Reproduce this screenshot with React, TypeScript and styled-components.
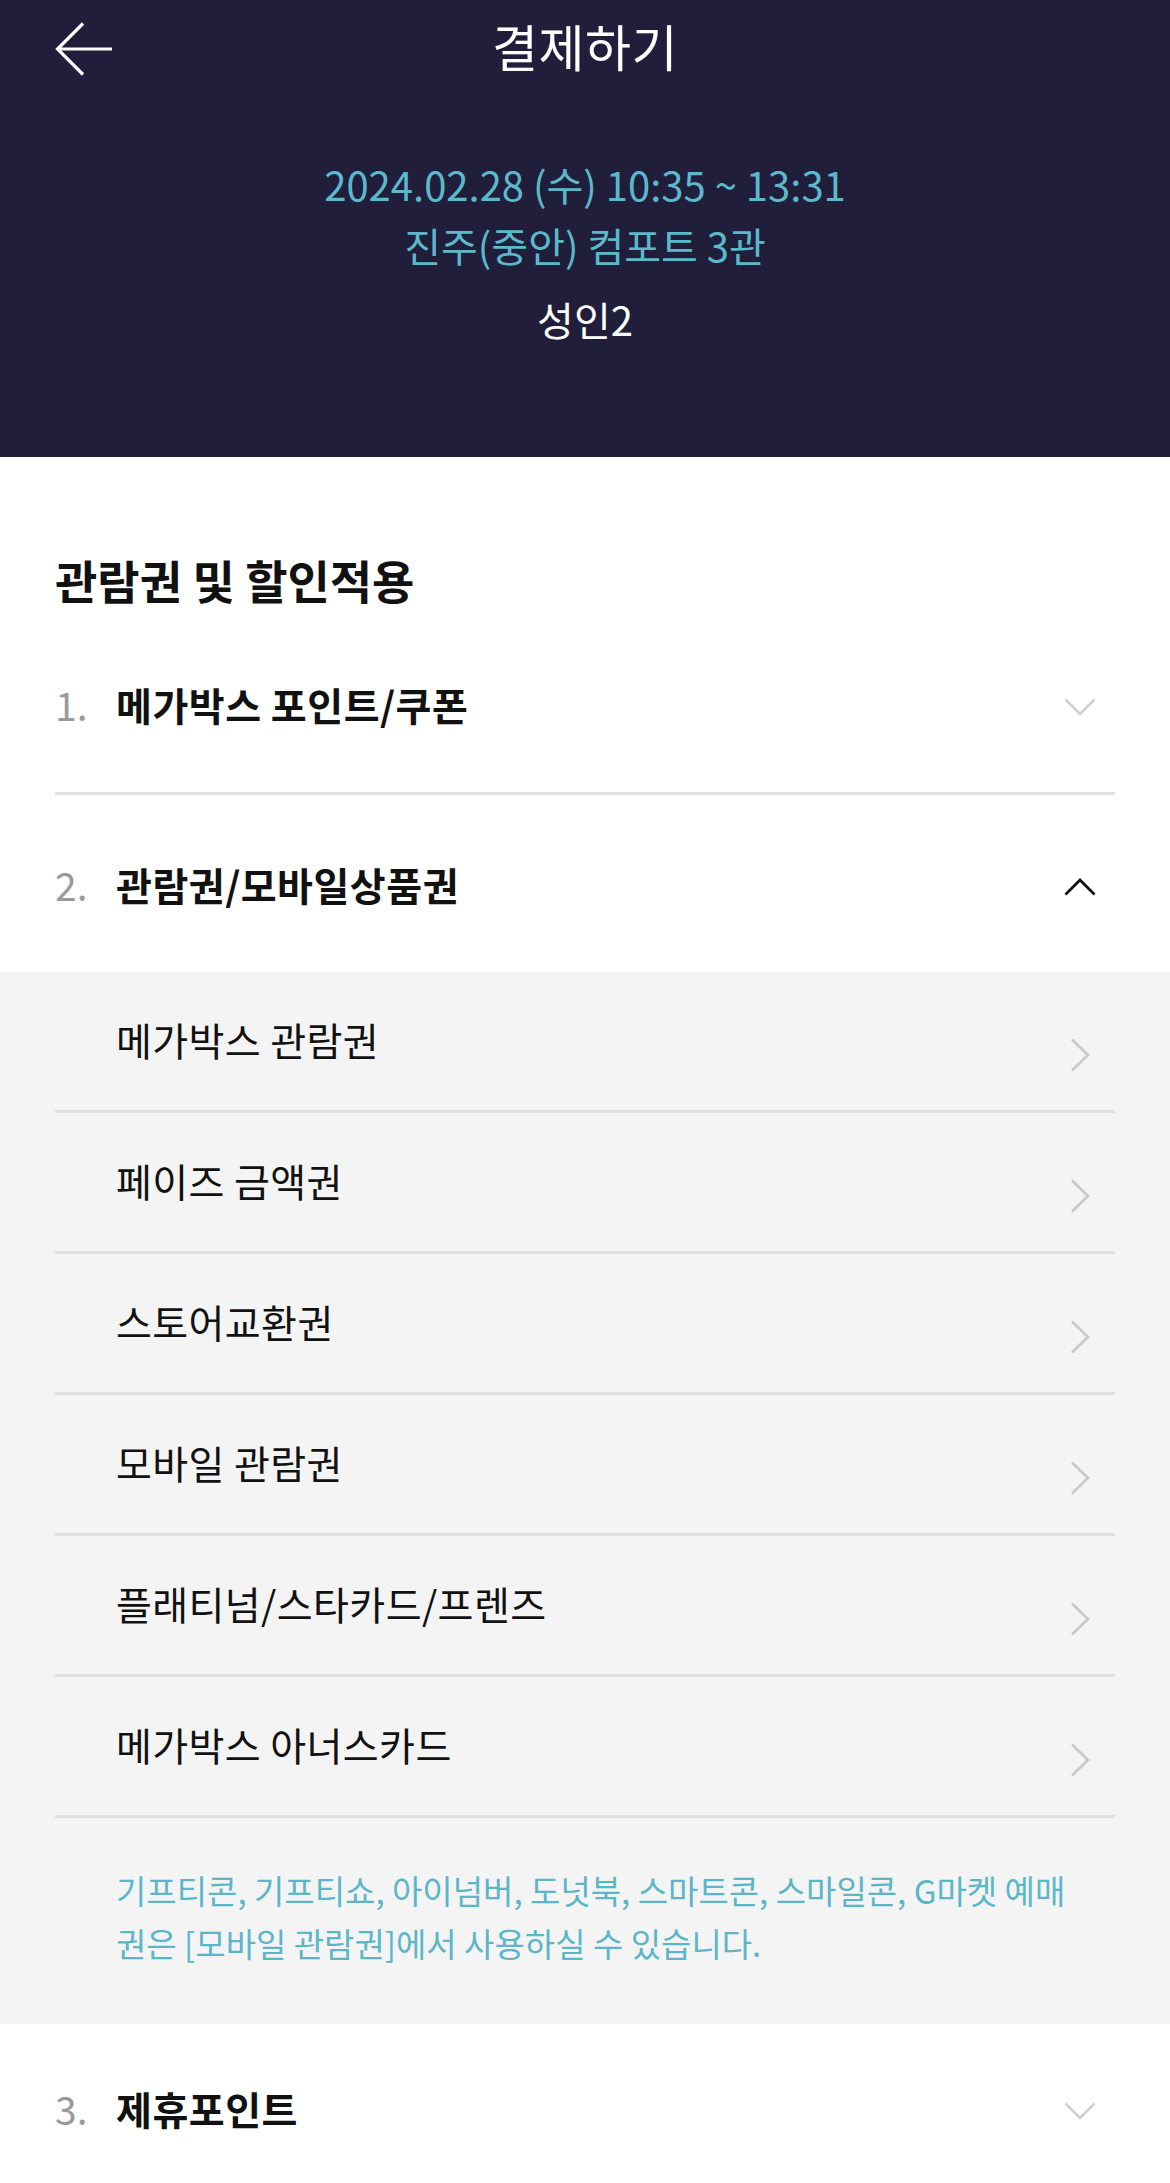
import React from "react";
import styled, { createGlobalStyle } from "styled-components";

const GlobalStyle = createGlobalStyle`
  * { box-sizing: border-box; }
  html, body { margin: 0; padding: 0; background: #ffffff; }
  body {
    font-family: "Noto Sans CJK KR", "Noto Sans", sans-serif;
    color: #111111;
    -webkit-font-smoothing: antialiased;
  }
`;

const Page = styled.div`
  width: 1170px;
  min-height: 2183px;
  background: #ffffff;
  overflow: hidden;
`;

const Header = styled.header`
  height: 457px;
  background: #201e3b;
  display: flex;
  flex-direction: column;
`;

const TopBar = styled.div`
  height: 96px;
  display: grid;
  grid-template-columns: 160px 1fr 160px;
  align-items: center;
`;

const BackButton = styled.button`
  justify-self: start;
  margin-left: 54px;
  margin-top: 2px;
  width: 64px;
  height: 56px;
  padding: 0;
  border: 0;
  background: transparent;
  display: flex;
  align-items: center;
  justify-content: flex-start;
`;

const Title = styled.h1`
  margin: -6px 0 0;
  text-align: center;
  font-size: 50px;
  font-weight: 400;
  line-height: 96px;
  letter-spacing: 0.5px;
  color: #ffffff;
`;

const Info = styled.div`
  padding-top: 58px;
  display: flex;
  flex-direction: column;
  align-items: center;
`;

const InfoLine = styled.div<{ $tone: "accent" | "light"; $gap?: number }>`
  font-size: 40px;
  line-height: 61px;
  margin-top: ${(p) => p.$gap ?? 0}px;
  color: ${(p) => (p.$tone === "accent" ? "#5bb9cb" : "#ffffff")};
`;

const Section = styled.section`
  padding-top: 92px;
`;

const SectionTitle = styled.h2`
  margin: 0 55px;
  font-size: 46px;
  line-height: 60px;
  font-weight: 700;
  color: #111111;
`;

const Accordion = styled.div`
  margin-top: 5px;
`;

const ItemHeader = styled.div<{ $divider?: boolean; $height?: number }>`
  margin: 0 55px;
  height: ${(p) => p.$height ?? (p.$divider ? 181 : 177)}px;
  padding-top: ${(p) => (p.$divider ? 2 : 0)}px;
  display: flex;
  align-items: center;
  border-bottom: ${(p) => (p.$divider ? "3px solid #e1e1e1" : "0")};
`;

const ItemNumber = styled.span`
  width: 61px;
  font-size: 39px;
  font-weight: 400;
  color: #9a9a9a;
  flex-shrink: 0;
`;

const ItemTitle = styled.span`
  flex: 1;
  font-size: 39px;
  font-weight: 700;
  color: #111111;
  letter-spacing: 0.5px;
`;

const Toggle = styled.span`
  width: 36px;
  margin-right: 17px;
  margin-top: 6px;
  display: flex;
  justify-content: center;
`;

const Panel = styled.div`
  background: #f4f4f4;
  padding-bottom: 54px;
`;

const SubList = styled.ul`
  list-style: none;
  margin: 0 55px;
  padding: 0;
`;

const SubItem = styled.li`
  height: 141px;
  border-bottom: 3px solid #e0e0e0;
  display: flex;
  align-items: center;
  padding-left: 61px;
`;

const SubLabel = styled.span`
  flex: 1;
  font-size: 39px;
  font-weight: 400;
  color: #111111;
  letter-spacing: 0.4px;
  margin-top: -4px;
`;

const SubArrow = styled.span`
  width: 36px;
  margin-right: 17px;
  margin-top: 28px;
  display: flex;
  justify-content: center;
`;

const Notice = styled.p`
  margin: 46px 55px 0;
  padding-left: 61px;
  padding-right: 22px;
  font-size: 33px;
  line-height: 53px;
  color: #5bb7c8;
`;

const BackArrow = () => (
  <svg width="60" height="54" viewBox="0 0 60 54" fill="none">
    <path
      d="M58 27H3M29 1.5L3.5 27L29 52.5"
      stroke="#ffffff"
      strokeWidth="3.2"
      strokeLinecap="butt"
    />
  </svg>
);

const ChevronDown = ({ color }: { color: string }) => (
  <svg width="32" height="18" viewBox="0 0 32 18" fill="none">
    <path d="M1.5 1.5L16 16L30.5 1.5" stroke={color} strokeWidth="2.6" />
  </svg>
);

const ChevronUp = ({ color }: { color: string }) => (
  <svg width="32" height="18" viewBox="0 0 32 18" fill="none">
    <path d="M1.5 16.5L16 2L30.5 16.5" stroke={color} strokeWidth="2.8" />
  </svg>
);

const ChevronRight = () => (
  <svg width="20" height="34" viewBox="0 0 20 34" fill="none">
    <path d="M2 1.5L18 17L2 32.5" stroke="#c9c9c9" strokeWidth="2.6" />
  </svg>
);

const subItems = [
  "메가박스 관람권",
  "페이즈 금액권",
  "스토어교환권",
  "모바일 관람권",
  "플래티넘/스타카드/프렌즈",
  "메가박스 아너스카드",
];

export default function App() {
  return (
    <Page>
      <GlobalStyle />
      <Header>
        <TopBar>
          <BackButton aria-label="뒤로가기">
            <BackArrow />
          </BackButton>
          <Title>결제하기</Title>
          <span />
        </TopBar>
        <Info>
          <InfoLine $tone="accent">2024.02.28 (수) 10:35 ~ 13:31</InfoLine>
          <InfoLine $tone="accent">진주(중안) 컴포트 3관</InfoLine>
          <InfoLine $tone="light" $gap={13}>성인2</InfoLine>
        </Info>
      </Header>

      <Section>
        <SectionTitle>관람권 및 할인적용</SectionTitle>
        <Accordion>
          <ItemHeader $divider>
            <ItemNumber>1.</ItemNumber>
            <ItemTitle>메가박스 포인트/쿠폰</ItemTitle>
            <Toggle>
              <ChevronDown color="#cfcfcf" />
            </Toggle>
          </ItemHeader>
          <ItemHeader>
            <ItemNumber>2.</ItemNumber>
            <ItemTitle>관람권/모바일상품권</ItemTitle>
            <Toggle>
              <ChevronUp color="#111111" />
            </Toggle>
          </ItemHeader>
          <Panel>
            <SubList>
              {subItems.map((label) => (
                <SubItem key={label}>
                  <SubLabel>{label}</SubLabel>
                  <SubArrow>
                    <ChevronRight />
                  </SubArrow>
                </SubItem>
              ))}
            </SubList>
            <Notice>
              기프티콘, 기프티쇼, 아이넘버, 도넛북, 스마트콘, 스마일콘, G마켓 예매권은 [모바일 관람권]에서 사용하실 수 있습니다.
            </Notice>
          </Panel>
          <ItemHeader $height={168}>
            <ItemNumber>3.</ItemNumber>
            <ItemTitle>제휴포인트</ItemTitle>
            <Toggle>
              <ChevronDown color="#cfcfcf" />
            </Toggle>
          </ItemHeader>
        </Accordion>
      </Section>
    </Page>
  );
}
